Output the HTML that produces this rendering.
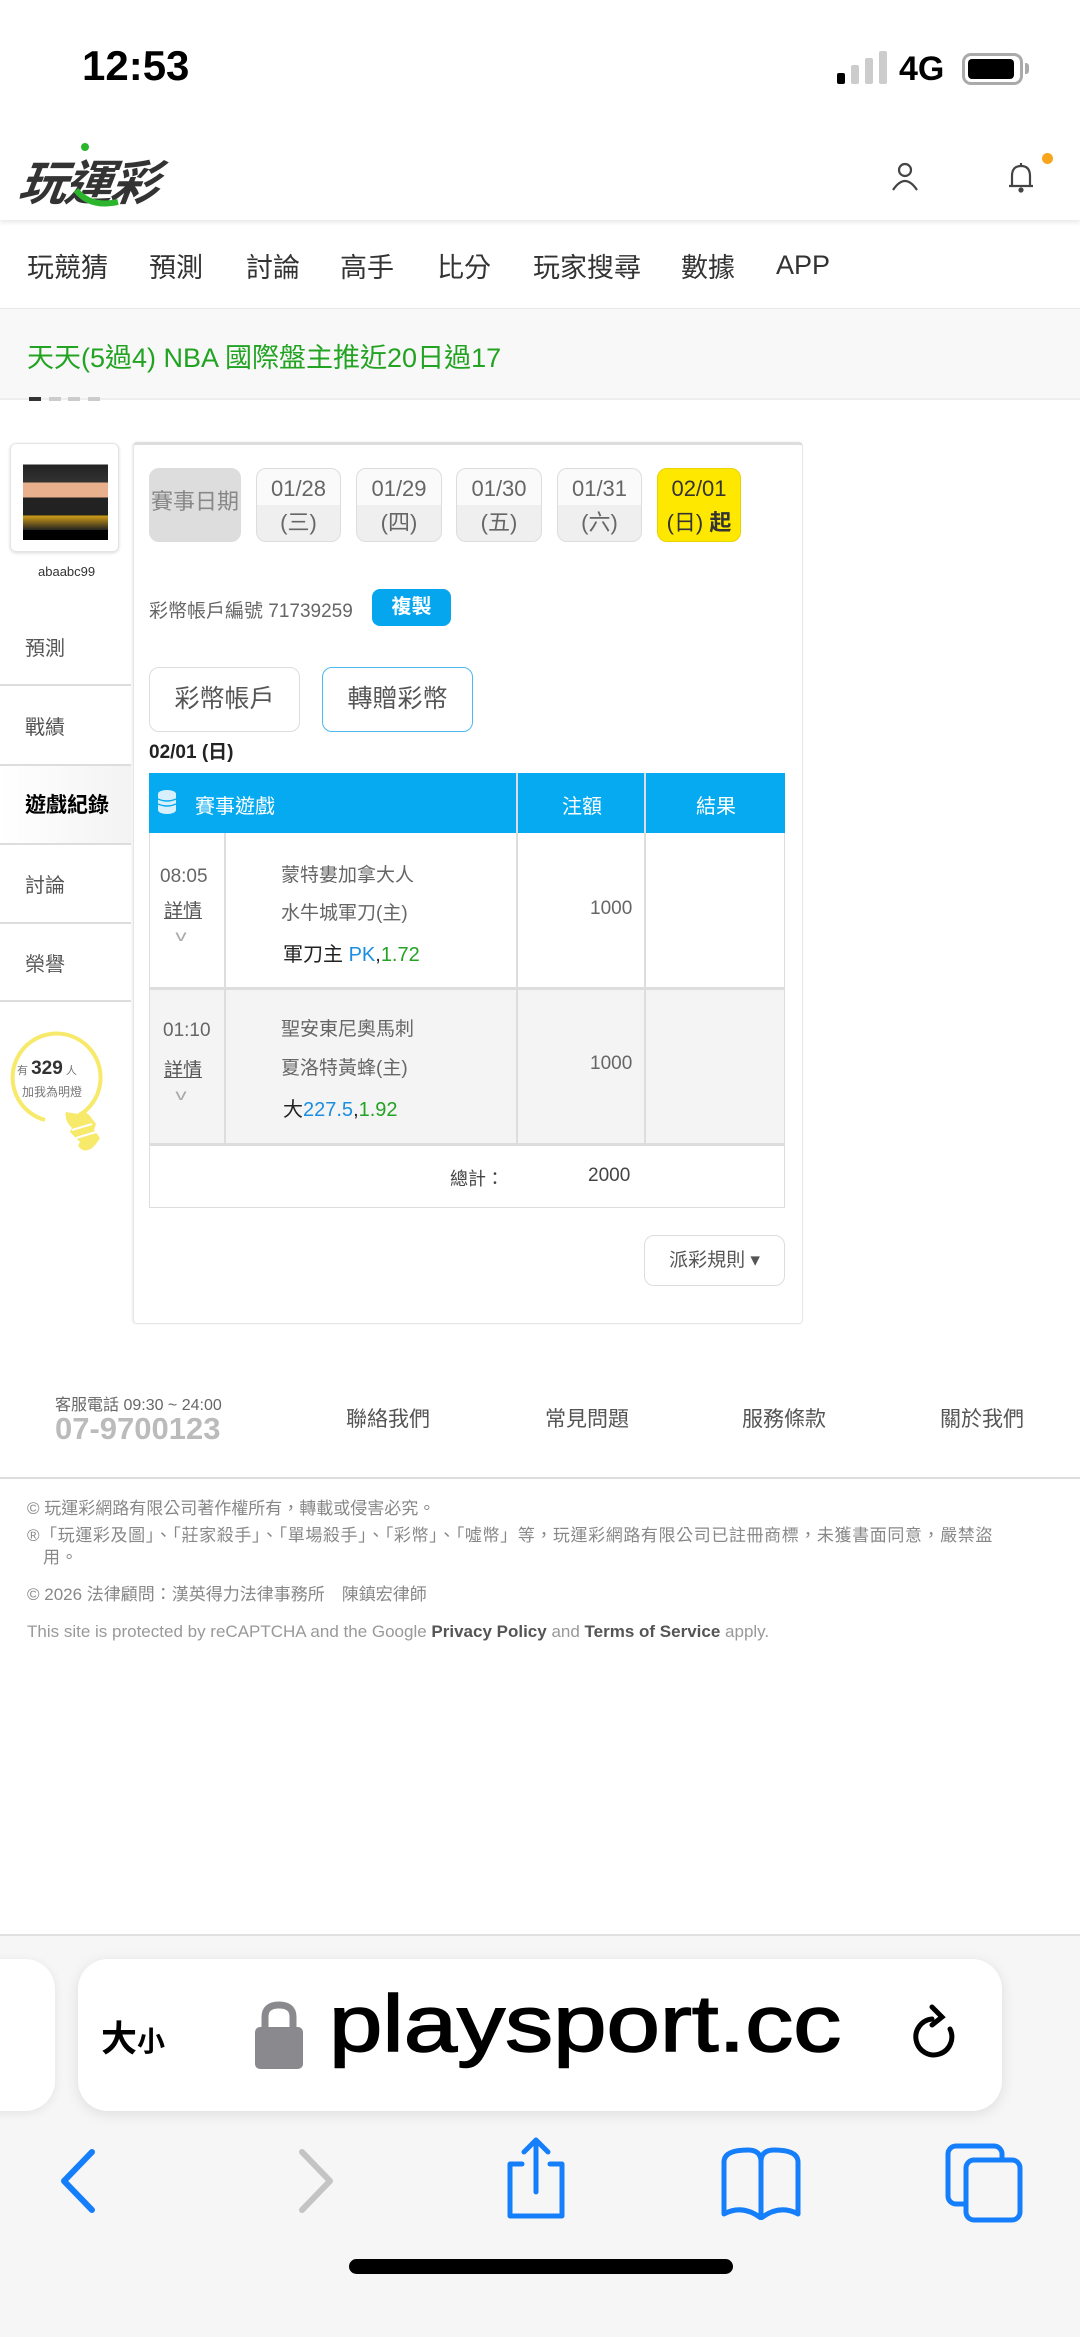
<!DOCTYPE html>
<html><head><meta charset="utf-8">
<style>
*{margin:0;padding:0;box-sizing:border-box}
body{width:1080px;height:2337px;background:#fff;position:relative;overflow:hidden;font-family:"Liberation Sans","Noto Sans CJK TC",sans-serif;color:#333}
.a{position:absolute;white-space:nowrap}
.nav span{position:absolute;top:246px;font-size:27px;color:#333}
.sb{position:absolute;left:0;width:131px;font-size:20px;color:#555;padding-left:25px}
.db{position:absolute;top:468px;height:74px;border:1px solid #ddd;border-radius:10px;background:linear-gradient(#fafafa 50%,#efefef 50%);font-size:22px;color:#666;text-align:center;line-height:34px;padding-top:3px}
.line{position:absolute;background:#ddd}
.ft{position:absolute;font-size:17px;color:#888;left:27px}
</style></head><body>
<!-- status bar -->
<div class="a" style="left:82px;top:42px;font-size:42px;font-weight:bold;color:#000">12:53</div>
<div class="a" style="left:837px;top:73px;width:8px;height:11px;background:#000;border-radius:2px"></div>
<div class="a" style="left:851px;top:65px;width:8px;height:19px;background:#ccc;border-radius:2px"></div>
<div class="a" style="left:865px;top:58px;width:8px;height:26px;background:#ccc;border-radius:2px"></div>
<div class="a" style="left:879px;top:51px;width:8px;height:33px;background:#ccc;border-radius:2px"></div>
<div class="a" style="left:899px;top:50px;font-size:34px;font-weight:bold;color:#000">4G</div>
<div class="a" style="left:962px;top:53px;width:61px;height:32px;border:3px solid #aaa;border-radius:9px;padding:3px"><div style="width:46px;height:20px;background:#000;border-radius:4px"></div></div>
<div class="a" style="left:1025px;top:63px;width:4px;height:11px;background:#aaa;border-radius:0 3px 3px 0"></div>
<!-- header -->
<div class="a" style="left:0;top:132px;width:1080px;height:88px;box-shadow:0 3px 4px rgba(0,0,0,.08)"></div>
<div class="a" style="left:20px;top:144px;font-size:48px;font-weight:bold;font-style:italic;color:#333;letter-spacing:-2px;transform:skewX(-8deg)">玩運彩</div>
<svg class="a" style="left:70px;top:140px" width="60" height="70"><circle cx="15" cy="7" r="4" fill="#2cb52c"/><path d="M6 50 Q20 68 48 62" stroke="#2cb52c" stroke-width="6" fill="none"/></svg>
<svg class="a" style="left:890px;top:160px" width="30" height="32" fill="none" stroke="#444" stroke-width="2.2"><circle cx="15" cy="10" r="6"/><path d="M3 30 Q15 12 27 30"/></svg>
<svg class="a" style="left:1006px;top:160px" width="30" height="34" fill="none" stroke="#444" stroke-width="2.2"><path d="M6 26 V16 Q6 6 15 6 Q24 6 24 16 V26 Z M3 26 H27 M15 3 V6"/><circle cx="15" cy="30" r="1.5" fill="#444"/></svg>
<div class="a" style="left:1042px;top:153px;width:11px;height:11px;border-radius:50%;background:#f8a51b"></div>
<!-- nav -->
<div class="nav"><span style="left:27px">玩競猜</span><span style="left:149px">預測</span><span style="left:246px">討論</span><span style="left:340px">高手</span><span style="left:437px">比分</span><span style="left:533px">玩家搜尋</span><span style="left:681px">數據</span><span style="left:776px;top:250px">APP</span></div>
<div class="a" style="left:0;top:308px;width:1080px;height:92px;background:#f8f8f8;border-top:1px solid #e8e8e8;border-bottom:2px solid #eee"></div>
<div class="a" style="left:27px;top:336px;font-size:27px;color:#22a322">天天(5過4) NBA 國際盤主推近20日過17</div>
<div class="a" style="left:29px;top:397px;width:12px;height:4px;background:#333"></div>
<div class="a" style="left:49px;top:397px;width:12px;height:4px;background:#ccc"></div>
<div class="a" style="left:68px;top:397px;width:12px;height:4px;background:#ccc"></div>
<div class="a" style="left:88px;top:397px;width:12px;height:4px;background:#ccc"></div>
<!-- sidebar -->
<div class="a" style="left:10px;top:443px;width:109px;height:109px;border:1px solid #e4e4e4;border-radius:6px;box-shadow:0 1px 3px rgba(0,0,0,.15);padding:14px 12px">
<div style="width:85px;height:82px;background:linear-gradient(#fff 8%,#222 8%,#333 30%,#e8b08c 30%,#e8b08c 48%,#222 48%,#222 70%,#d4a017 70%,#222 88%,#000 88%)"></div></div>
<div class="a" style="left:38px;top:564px;font-size:13px;color:#333">abaabc99</div>
<div class="sb" style="top:632px">預測</div>
<div class="line" style="left:0;top:684px;width:131px;height:2px"></div>
<div class="sb" style="top:711px">戰績</div>
<div class="line" style="left:0;top:764px;width:131px;height:2px"></div>
<div class="a" style="left:0;top:766px;width:131px;height:78px;background:linear-gradient(90deg,#fff,#f3f3f3)"></div>
<div class="sb" style="top:789px;font-weight:bold;color:#000;font-size:21px">遊戲紀錄</div>
<div class="line" style="left:0;top:843px;width:131px;height:2px"></div>
<div class="sb" style="top:869px">討論</div>
<div class="line" style="left:0;top:922px;width:131px;height:2px"></div>
<div class="sb" style="top:948px">榮譽</div>
<div class="line" style="left:0;top:1000px;width:131px;height:2px"></div>
<svg class="a" style="left:0;top:1020px" width="120" height="140"><path d="M45 100 A44 44 0 1 1 78 96" fill="none" stroke="#f7e96a" stroke-width="4"/><path d="M66 92 Q64 100 72 108 L70 112 L80 122 L78 126 Q86 136 96 124 L100 118 L94 110 L96 104 L90 96 Q82 88 78 94 Z" fill="#f7e96a"/><path d="M72 110 L92 104 M76 118 L96 112" stroke="#fff" stroke-width="2"/></svg>
<div class="a" style="left:17px;top:1058px;font-size:11px;color:#777">有 <b style="font-size:19px;color:#333">329</b> 人</div>
<div class="a" style="left:22px;top:1083px;font-size:12px;color:#777">加我為明燈</div>
<!-- main panel -->
<div class="a" style="left:133px;top:442px;width:670px;height:882px;border:1px solid #e6e6e6;border-top:3px solid #ddd;border-radius:4px;box-shadow:-1px 0 2px rgba(0,0,0,.08)"></div>
<div class="db" style="left:149px;width:92px;background:#ddd;line-height:66px;padding:0;color:#888">賽事日期</div>
<div class="db" style="left:256px;width:85px">01/28<br>(三)</div>
<div class="db" style="left:356px;width:86px">01/29<br>(四)</div>
<div class="db" style="left:456px;width:86px">01/30<br>(五)</div>
<div class="db" style="left:557px;width:85px">01/31<br>(六)</div>
<div class="db" style="left:657px;width:84px;background:#ffe800;border-color:#e8d200;color:#333">02/01<br>(日) <b>起</b></div>
<div class="a" style="left:149px;top:596px;font-size:19px;color:#666">彩幣帳戶編號 71739259</div>
<div class="a" style="left:372px;top:589px;width:79px;height:37px;background:#05a6ee;border-radius:8px;color:#fff;font-weight:bold;font-size:20px;text-align:center;line-height:37px">複製</div>
<div class="a" style="left:149px;top:667px;width:151px;height:65px;border:1px solid #ddd;border-radius:10px;font-size:25px;color:#555;text-align:center;line-height:63px">彩幣帳戶</div>
<div class="a" style="left:322px;top:667px;width:151px;height:65px;border:1px solid #4bb9ec;border-radius:10px;font-size:25px;color:#555;text-align:center;line-height:63px">轉贈彩幣</div>
<div class="a" style="left:149px;top:737px;font-size:19px;font-weight:bold;color:#222">02/01 (日)</div>
<!-- table -->
<div class="a" style="left:149px;top:773px;width:636px;height:435px;border:1px solid #ddd"></div>
<div class="a" style="left:149px;top:773px;width:636px;height:60px;background:#05aaf0"></div>
<div class="a" style="left:516px;top:773px;width:2px;height:371px;background:#ddd"></div>
<div class="a" style="left:644px;top:773px;width:2px;height:371px;background:#ddd"></div>
<svg class="a" style="left:157px;top:789px" width="20" height="26"><ellipse cx="10" cy="5" rx="9" ry="4" fill="#d8f0fc"/><rect x="1" y="5" width="18" height="16" fill="#d8f0fc"/><ellipse cx="10" cy="21" rx="9" ry="4" fill="#d8f0fc"/><path d="M1 10 Q10 14 19 10 M1 15 Q10 19 19 15" stroke="#05aaf0" stroke-width="1.5" fill="none"/></svg>
<div class="a" style="left:195px;top:790px;font-size:20px;color:#fff">賽事遊戲</div>
<div class="a" style="left:562px;top:790px;font-size:20px;color:#fff">注額</div>
<div class="a" style="left:696px;top:790px;font-size:20px;color:#fff">結果</div>
<div class="a" style="left:150px;top:988px;width:634px;height:156px;background:#f4f4f4"></div>
<div class="a" style="left:516px;top:988px;width:2px;height:156px;background:#ddd"></div>
<div class="a" style="left:644px;top:988px;width:2px;height:156px;background:#ddd"></div>
<div class="line" style="left:149px;top:987px;width:636px;height:3px"></div>
<div class="line" style="left:149px;top:1143px;width:636px;height:3px"></div>
<div class="line" style="left:224px;top:833px;width:2px;height:311px"></div>
<div class="a" style="left:160px;top:866px;font-size:19px;color:#666">08:05</div>
<div class="a" style="left:164px;top:896px;font-size:19px;color:#555;text-decoration:underline">詳情</div>
<div class="a" style="left:177px;top:928px;font-size:16px;color:#aaa;transform:scaleX(1.4)">v</div>
<div class="a" style="left:281px;top:860px;font-size:19px;color:#666">蒙特婁加拿大人</div>
<div class="a" style="left:281px;top:898px;font-size:19px;color:#666">水牛城軍刀(主)</div>
<div class="a" style="left:283px;top:938px;font-size:20px;color:#222">軍刀主 <span style="color:#1a8ee0">PK</span>,<span style="color:#22a322">1.72</span></div>
<div class="a" style="left:590px;top:898px;font-size:19px;color:#666">1000</div>
<div class="a" style="left:163px;top:1020px;font-size:19px;color:#666">01:10</div>
<div class="a" style="left:164px;top:1055px;font-size:19px;color:#555;text-decoration:underline">詳情</div>
<div class="a" style="left:177px;top:1087px;font-size:16px;color:#aaa;transform:scaleX(1.4)">v</div>
<div class="a" style="left:281px;top:1014px;font-size:19px;color:#666">聖安東尼奧馬刺</div>
<div class="a" style="left:281px;top:1053px;font-size:19px;color:#666">夏洛特黃蜂(主)</div>
<div class="a" style="left:283px;top:1093px;font-size:20px;color:#222">大<span style="color:#1a8ee0">227.5</span>,<span style="color:#22a322">1.92</span></div>
<div class="a" style="left:590px;top:1053px;font-size:19px;color:#666">1000</div>
<div class="a" style="left:450px;top:1165px;font-size:18px;color:#444">總計：</div>
<div class="a" style="left:588px;top:1165px;font-size:19px;color:#444">2000</div>
<div class="a" style="left:644px;top:1235px;width:141px;height:51px;border:1px solid #ddd;border-radius:10px;font-size:19px;color:#555;text-align:center;line-height:49px">派彩規則 ▾</div>
<!-- footer -->
<div class="a" style="left:55px;top:1391px;font-size:16px;color:#666">客服電話 09:30 ~ 24:00</div>
<div class="a" style="left:55px;top:1411px;font-size:31px;color:#bbb;font-weight:bold">07-9700123</div>
<div class="a" style="left:346px;top:1403px;font-size:21px;color:#555">聯絡我們</div>
<div class="a" style="left:545px;top:1403px;font-size:21px;color:#555">常見問題</div>
<div class="a" style="left:742px;top:1403px;font-size:21px;color:#555">服務條款</div>
<div class="a" style="left:940px;top:1403px;font-size:21px;color:#555">關於我們</div>
<div class="line" style="left:0;top:1477px;width:1080px;height:2px"></div>
<div class="ft" style="top:1494px">© 玩運彩網路有限公司著作權所有，轉載或侵害必究。</div>
<div class="ft" style="top:1525px;white-space:normal;width:1040px;line-height:22px;letter-spacing:0.6px">®「玩運彩及圖」、「莊家殺手」、「單場殺手」、「彩幣」、「噓幣」等，玩運彩網路有限公司已註冊商標，未獲書面同意，嚴禁盜<br>&nbsp;&nbsp;&nbsp;用。</div>
<div class="ft" style="top:1580px">© 2026 法律顧問：漢英得力法律事務所　陳鎮宏律師</div>
<div class="ft" style="top:1622px;color:#999">This site is protected by reCAPTCHA and the Google <b style="color:#555">Privacy Policy</b> and <b style="color:#555">Terms of Service</b> apply.</div>
<!-- safari -->
<div class="a" style="left:0;top:1934px;width:1080px;height:403px;background:#f6f6f6;border-top:2px solid #e0e0e0"></div>
<div class="a" style="left:-40px;top:1959px;width:95px;height:152px;background:#fff;border-radius:30px;box-shadow:0 2px 10px rgba(0,0,0,.08)"></div>
<div class="a" style="left:78px;top:1959px;width:924px;height:152px;background:#fff;border-radius:30px;box-shadow:0 3px 14px rgba(0,0,0,.1)"></div>
<div class="a" style="left:101px;top:2010px;font-size:36px;font-weight:bold;color:#000;font-family:'Noto Sans CJK TC',sans-serif">大<span style="font-size:28px">小</span></div>
<svg class="a" style="left:253px;top:1999px" width="52" height="72"><path d="M12 30 V18 Q12 6 26 6 Q40 6 40 18 V30" stroke="#8a8a8e" stroke-width="7" fill="none"/><rect x="2" y="28" width="48" height="42" rx="5" fill="#8a8a8e"/></svg>
<div class="a" style="left:329px;top:1978px;font-size:80px;color:#000;font-family:'Liberation Sans',sans-serif;transform:scaleX(1.2);transform-origin:left;-webkit-text-stroke:1.5px #000">playsport.cc</div>
<svg class="a" style="left:912px;top:2003px" width="50" height="60" fill="none" stroke="#000" stroke-width="5" stroke-linecap="round"><path d="M20 16 A18 18 0 1 0 38 26"/><path d="M20 4 L30 14 L20 22"/></svg>
<svg class="a" style="left:56px;top:2148px" width="50" height="66" fill="none" stroke="#157efb" stroke-width="6" stroke-linecap="round" stroke-linejoin="round"><path d="M36 4 L8 33 L36 62"/></svg>
<svg class="a" style="left:290px;top:2148px" width="50" height="66" fill="none" stroke="#c4c4c4" stroke-width="6" stroke-linecap="round" stroke-linejoin="round"><path d="M12 4 L40 33 L12 62"/></svg>
<svg class="a" style="left:500px;top:2136px" width="72" height="84" fill="none" stroke="#157efb" stroke-width="5" stroke-linecap="round" stroke-linejoin="round"><path d="M22 28 H10 V80 H62 V28 H50 M36 4 V56 M24 16 L36 4 L48 16"/></svg>
<svg class="a" style="left:718px;top:2146px" width="86" height="74" fill="none" stroke="#157efb" stroke-width="5" stroke-linejoin="round"><path d="M43 16 Q43 4 30 4 Q6 4 6 16 V68 Q24 58 43 72 Q62 58 80 68 V16 Q80 4 56 4 Q43 4 43 16 V70"/></svg>
<svg class="a" style="left:944px;top:2142px" width="82" height="82" fill="none" stroke="#157efb" stroke-width="5"><rect x="4" y="4" width="54" height="58" rx="8"/><rect x="22" y="18" width="54" height="60" rx="8" fill="#f6f6f6"/></svg>
<div class="a" style="left:349px;top:2259px;width:384px;height:15px;border-radius:8px;background:#000"></div>
</body></html>
